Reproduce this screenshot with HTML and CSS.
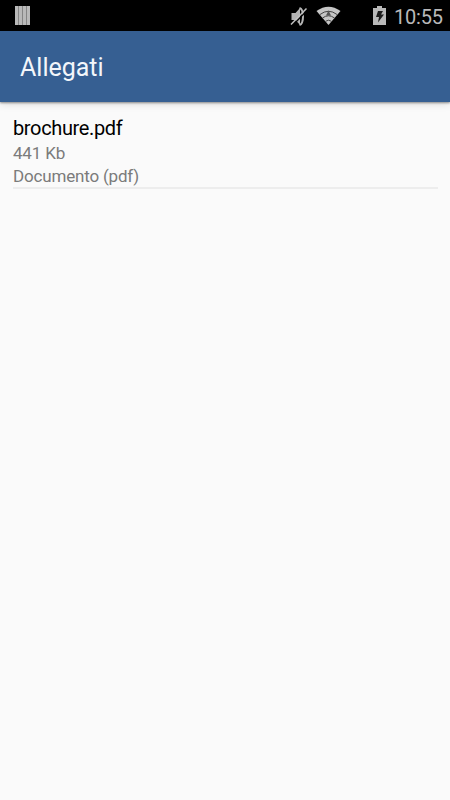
FILE: index.html
```html
<!DOCTYPE html>
<html lang="it">
<head>
  <meta charset="UTF-8" />
  <meta name="viewport" content="width=device-width, initial-scale=1.0"/>
  <title>Allegati</title>
  <link rel="stylesheet" href="styles.css">
</head>
<body>
  <div class="status-bar">
    <svg class="bars" width="16" height="20" viewBox="0 0 16 20">
      <rect width="15" height="19" fill="#b9b9b9"/>
      <path d="M3.500 0v19M7.500 0v19M11.500 0v19" stroke="#858585"/>
    </svg>
    <svg class="mute" width="18" height="20" viewBox="0 0 18 20">
      <path d="M1.500 7h4L10 2v17l-4.500-5h-4z" fill="#b4b4b4"/>
      <path d="M9.500 2q3.500 1 3.500 8.500t-3.500 8.500" fill="none" stroke="#b4b4b4" stroke-width="2"/>
      <path d="M2.500 19.500L17.500 4" stroke="#000" stroke-width="1.300"/>
      <path d="M1 18.500L16.500 2.500" stroke="#c0c0c0" stroke-width="1.500"/>
    </svg>
    <svg class="wifi" width="26" height="20" viewBox="0 0 26 20">
      <path d="M.5 5Q12.500-3.500 24.500 5L12.500 19z" fill="#c6c6c6"/>
      <path d="M4 8.500q8.500-6.500 17 0M6.500 12q6-4.500 12 0M9.500 15.300q3-2.200 6 0" fill="none" stroke="#444" stroke-width="1"/>
      <path d="M12.500 4.500l2.500 5h-5z" fill="#555"/>
    </svg>
    <svg class="battery" width="14" height="20" viewBox="0 0 14 20">
      <path d="M4 0h5v2h4v17H0V2h4z" fill="#b9b9b9"/>
      <path d="M5 5h5L8 8.500h3L5 16.500l1-5.500H3z" fill="#1c1c1c"/>
    </svg>
    <span class="clock">10:55</span>
  </div>

  <header class="toolbar">
    <h1>Allegati</h1>
  </header>

  <ul class="attachments">
    <li class="attachment">
      <p class="name">brochure.pdf</p>
      <p class="info">441 Kb</p>
      <p class="info">Documento (pdf)</p>
    </li>
  </ul>
</body>
</html>
```

FILE: styles.css
```css
* {
  box-sizing: border-box;
}

body {
  margin: 0;
  min-height: 100vh;
  font-family: Roboto, sans-serif;
  background-color: #fafafa;
  color: #000;
}

.status-bar {
  display: flex;
  align-items: flex-start;
  height: 31px;
  padding: 6px 7px 0 15px;
  background: #000;
}

.mute {
  margin-left: auto;
}

.wifi {
  margin-left: 8px;
}

.battery {
  margin-left: 31px;
}

.clock {
  width: 49px;
  margin-left: 7px;
  font-size: 20px;
  line-height: 22px;
  letter-spacing: -0.2px;
  color: #b9b9b9;
  white-space: nowrap;
}

.toolbar {
  display: flex;
  align-items: center;
  height: 71px;
  padding: 2px 20px 0;
  background: #365f92;
  box-shadow: 0 1px 2px rgba(0, 0, 0, 0.4), 0 2px 8px rgba(0, 0, 0, 0.13);
}

.toolbar h1 {
  margin: 0;
  font-size: 25px;
  font-weight: 400;
  color: #f3f6fa;
}

.attachments {
  margin: 0;
  padding: 14px 12px 14px 13px;
  list-style: none;
}

.attachment {
  height: 73px;
  border-bottom: 2px solid #ededed;
}

.attachment p {
  margin: 0;
}

.attachment .name {
  margin-bottom: 1px;
  font-size: 20px;
  line-height: 25px;
  letter-spacing: -0.36px;
}

.info {
  font-size: 17px;
  line-height: 23px;
  letter-spacing: -0.18px;
  color: #7b7b7b;
}
```
